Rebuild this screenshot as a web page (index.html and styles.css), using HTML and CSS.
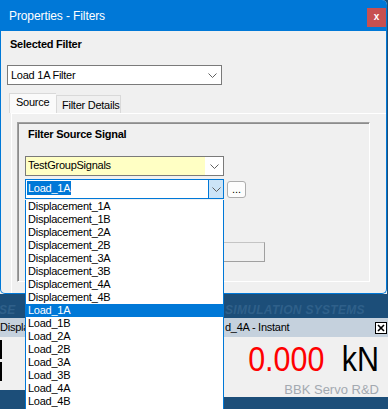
FILE: index.html
```html
<!DOCTYPE html>
<html lang="en">
<head>
    <meta charset="UTF-8">
    <title>Properties - Filters</title>
    <link rel="stylesheet" href="styles.css">
</head>
<body>
<div class="screen">
    <div class="dialog">
        <div class="titlebar">
            <span class="title">Properties - Filters</span>
            <span class="close">x</span>
        </div>
        <div class="dialog-body">
            <div class="heading">Selected Filter</div>
            <div class="combo filter-combo">
                <span class="combo-text">Load 1A Filter</span>
                <span class="arrow"><svg width="9" height="5" viewBox="0 0 9 5"><polyline points="0.5,0.5 4.5,4.5 8.5,0.5" fill="none" stroke="#606060" stroke-width="1"/></svg></span>
            </div>
            <div class="tabs">
                <div class="tab active">Source</div>
                <div class="tab">Filter Details</div>
            </div>
            <div class="tab-page">
                <div class="group">
                    <div class="group-title">Filter Source Signal</div>
                    <div class="combo group-combo">
                        <span class="edit">TestGroupSignals</span>
                        <span class="arrow"><svg width="9" height="5" viewBox="0 0 9 5"><polyline points="0.5,0.5 4.5,4.5 8.5,0.5" fill="none" stroke="#606060" stroke-width="1"/></svg></span>
                    </div>
                    <div class="signal-row">
                        <div class="combo signal-combo">
                            <span class="edit"><span class="selected">Load_1A</span></span>
                            <span class="drop-btn"><svg width="9" height="5" viewBox="0 0 9 5"><polyline points="0.5,0.5 4.5,4.5 8.5,0.5" fill="none" stroke="#606060" stroke-width="1"/></svg></span>
                        </div>
                        <div class="browse">...</div>
                    </div>
                    <div class="ghost-button"></div>
                </div>
            </div>
        </div>
    </div>

    <div class="backdrop">
        <div class="band">
            <span class="band-left">SE</span>
            <span class="band-right">SIMULATION SYSTEMS</span>
        </div>
        <div class="windows">
            <div class="subwin left-win">
                <div class="subwin-title"><span class="cut">Displa</span></div>
                <div class="subwin-body">
                    <div class="black-box"></div>
                    <div class="black-box"></div>
                </div>
            </div>
            <div class="subwin right-win">
                <div class="subwin-title">
                    <span class="win-name">d_4A - Instant</span>
                    <span class="win-close"><svg width="10" height="10" viewBox="0 0 10 10"><path d="M2 2 L8 8 M8 2 L2 8" stroke="#000" stroke-width="1.6"/></svg></span>
                </div>
                <div class="subwin-body">
                    <div class="reading"><span class="value">0.000</span><span class="unit">kN</span></div>
                    <div class="brand">BBK Servo R&amp;D</div>
                </div>
            </div>
        </div>
    </div>

    <ul class="dropdown">
        <li>Displacement_1A</li>
        <li>Displacement_1B</li>
        <li>Displacement_2A</li>
        <li>Displacement_2B</li>
        <li>Displacement_3A</li>
        <li>Displacement_3B</li>
        <li>Displacement_4A</li>
        <li>Displacement_4B</li>
        <li class="current">Load_1A</li>
        <li>Load_1B</li>
        <li>Load_2A</li>
        <li>Load_2B</li>
        <li>Load_3A</li>
        <li>Load_3B</li>
        <li>Load_4A</li>
        <li>Load_4B</li>
    </ul>
</div>
</body>
</html>
```

FILE: styles.css
```css
* { box-sizing: border-box; }
body { margin: 0; font-family: "Liberation Sans", Arial, sans-serif; font-size: 11px; letter-spacing: -0.25px; color: #000; }
.screen { position: relative; width: 388px; height: 409px; overflow: hidden; background: #1c4e79; }

/* dialog */
.dialog { width: 387px; height: 294px; display: flex; flex-direction: column; background: #f0f0f0; border-top-right-radius: 5px; overflow: hidden; }
.titlebar { height: 31px; flex: none; display: flex; align-items: flex-start; background: #0078d7; color: #fff; }
.title { font-size: 12px; letter-spacing: -0.1px; line-height: 14px; margin: 9px 0 0 9px; }
.close { margin-left: auto; margin-top: 8px; margin-right: 1px; width: 19px; height: 19px; background: #c75050; color: #fff; font-weight: bold; font-size: 10px; line-height: 17px; text-align: center; }
.dialog-body { flex: 1; display: flex; flex-direction: column; padding: 7px 0 0 6px; border: 1px solid #0078d7; border-top: none; border-radius: 0 0 5px 5px; overflow: hidden; }
.heading { font-weight: bold; line-height: 13px; margin-left: 3px; }

.combo { display: flex; height: 20px; border: 1px solid #7a7a7a; background: #fff; line-height: 13px; }
.arrow { flex: 1; display: flex; align-items: center; justify-content: center; }
.filter-combo { width: 215px; margin-top: 14px; align-items: center; }
.filter-combo .combo-text { padding-left: 3px; }
.filter-combo .arrow { justify-content: flex-end; padding-right: 4px; }

.tabs { display: flex; align-items: flex-end; height: 20px; margin-top: 8px; padding-left: 2px; flex: none; }
.tab { height: 18px; padding: 3px 0 0 5px; border: 1px solid #d9d9d9; border-bottom: none; width: 65px; }
.tab.active { height: 20px; width: 47px; padding: 2px 0 0 6px; background: #fafafa; border-right: none; }
.tab-page { flex: 1; margin-left: 4px; border-top: 1px solid #fff; border-left: 1px solid #fff; padding: 8px 0 0 5px; }

.group { width: 353px; height: 160px; border: 1px solid #a0a0a0; border-right-color: #fff; border-bottom-color: #fff; box-shadow: inset 1px 1px 0 #8c8c8c; padding: 5px 0 0 7px; }
.group-title { font-weight: bold; line-height: 13px; margin-left: 3px; }
.group-combo { width: 199px; margin-top: 15px; }
.group-combo .edit { width: 179px; background: #ffffc4; padding: 2px 0 0 2px; }
.signal-row { display: flex; align-items: center; margin-top: 3px; }
.signal-combo { width: 199px; border-color: #0078d7; }
.signal-combo .edit { width: 182px; padding: 2px 0 0 1px; }
.selected { display: inline-block; background: #0078d7; color: #fff; height: 14px; padding: 0 1px 0 1px; margin-top: -1px; line-height: 15px; }
.drop-btn { flex: 1; display: flex; align-items: center; justify-content: center; background: #cce4f7; border-left: 1px solid #0078d7; }
.browse { width: 19px; height: 17px; margin-left: 3px; border: 1px solid #adadad; border-radius: 3px; background: #fdfdfd; text-align: center; line-height: 14px; letter-spacing: 0; }
.ghost-button { width: 240px; height: 20px; margin-top: 43px; border: 1px solid #c4c4c4; border-right-color: #a0a0a0; border-bottom-color: #a0a0a0; background: #f0f0f0; }

/* application behind the dialog */
.band { height: 24px; display: flex; padding-top: 9px; font-weight: bold; font-style: italic; font-size: 12px; line-height: 14px; color: #2f608a; letter-spacing: 0.3px; }
.band-left { width: 226px; margin-left: -1px; }
.windows { display: flex; }
.subwin { display: flex; flex-direction: column; }
.left-win { width: 25px; }
.right-win { flex: 1; margin-left: 199px; }
.subwin-title { height: 19px; display: flex; align-items: center; background: #c5d1dd; line-height: 13px; padding-left: 1px; }
.left-win .subwin-title { padding-left: 0; }
.win-close { margin-left: auto; margin-right: 1px; width: 12px; height: 12px; border: 1px solid #000; background: #fff; display: flex; align-items: center; justify-content: center; }
.subwin-body { background: #f0f0f0; }
.left-win .subwin-body { height: 53px; padding-top: 3px; }
.black-box { height: 19px; border-left: 2px solid #000; margin-bottom: 3px; }
.right-win .subwin-body { height: 60px; text-align: right; padding-right: 9px; }
.reading { font-size: 35px; line-height: 35px; margin-top: 4px; letter-spacing: 0; transform: scaleX(0.87); transform-origin: right center; }
.value { color: #ff0000; }
.unit { margin-left: 20px; }
.brand { font-size: 13px; line-height: 15px; margin-top: 6px; color: #a3a9b0; letter-spacing: 0; }

/* open list of the signal combo */
.dropdown { position: absolute; left: 25px; top: 200px; width: 199px; height: 215px; margin: 0; padding: 0; list-style: none; background: #fff; border: 1px solid #0078d7; border-top: none; }
.dropdown li { height: 13px; line-height: 13px; padding-left: 2px; }
.dropdown li.current { background: #0078d7; color: #fff; }
```
